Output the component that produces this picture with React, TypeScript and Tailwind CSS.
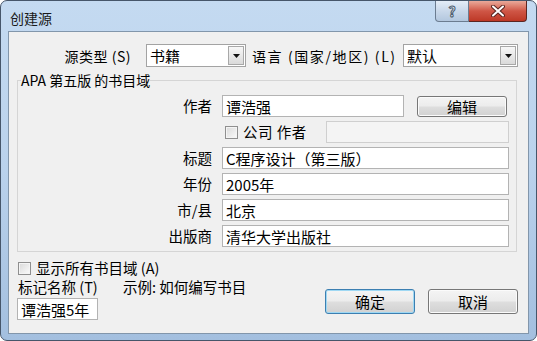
import React from 'react';

function Combo({ value, className }: { value: string; className: string }) {
  return (
    <div className={`flex h-[23px] items-center border border-[#a3a3a3] bg-white ${className}`}>
      <span className="flex-1 pl-[3px] text-[15px] leading-none">{value}</span>
      <span className="mr-[1px] flex h-[19px] w-[16px] items-center justify-center border border-[#a8a8a8] bg-gradient-to-b from-[#f7f7f7] to-[#dadada]">
        <svg width="7" height="4" viewBox="0 0 7 4">
          <path d="M0 0h7L3.5 4z" fill="#111" />
        </svg>
      </span>
    </div>
  );
}

function Field({ value, className }: { value?: string; className: string }) {
  return (
    <div
      className={`flex h-[22px] items-center border border-[#b3b3b3] pl-[3px] text-[15px] leading-none ${className}`}
    >
      {value}
    </div>
  );
}

function Btn({ label, className, primary }: { label: string; className: string; primary?: boolean }) {
  return (
    <div
      className={`flex items-center justify-center rounded-[3px] border bg-[linear-gradient(#f4f4f4_0%,#ececec_48%,#dedede_52%,#d1d1d1_100%)] text-[15px] leading-none ${
        primary
          ? 'border-[#3c7fb1] shadow-[inset_0_0_0_1px_#9fd8f3]'
          : 'border-[#777777] shadow-[inset_0_0_0_1px_#fbfbfb]'
      } ${className}`}
    >
      {label}
    </div>
  );
}

function Check() {
  return (
    <span className="block h-[13px] w-[13px] shrink-0 border border-[#8f8f8f] bg-gradient-to-br from-[#d9d9d9] to-[#fbfbfb] shadow-[inset_0_0_0_1px_#f4f4f4]" />
  );
}

export default function App() {
  return (
    <div className="h-[341px] w-[537px] bg-white font-['Noto_Sans_CJK_SC','Noto_Sans',sans-serif] text-black">
      <div className="flex h-full w-full flex-col rounded-[7px] border border-[#46566a] bg-gradient-to-b from-[#c4daf1] via-[#bad2ec] to-[#a3bfdf]">
        {/* title bar */}
        <div className="flex h-[30px] shrink-0">
          <span className="ml-[9px] mt-[10px] text-[14px] leading-none text-[#1a1a1a]">创建源</span>
          <div className="ml-auto mr-[9px] flex h-[21px]">
            <div className="flex w-[34px] items-center justify-center rounded-bl-[4px] border border-t-0 border-[#6b7c90] bg-gradient-to-b from-[#e4edf7] via-[#c9d8ea] to-[#b3c7de]">
              <span className="text-[14px] font-bold leading-none text-[#eef3f8] [-webkit-text-stroke:1px_#4a5a6c]">?</span>
            </div>
            <div className="flex w-[58px] items-center justify-center rounded-br-[4px] border border-l-0 border-t-0 border-[#5b2622] bg-gradient-to-b from-[#e9a99a] via-[#cf5646] to-[#bd3826]">
              <svg width="14" height="12" viewBox="0 0 14 12">
                <path d="M2 1.5 12 10.5M12 1.5 2 10.5" stroke="#5a2520" strokeWidth="4" strokeLinecap="round" />
                <path d="M2 1.5 12 10.5M12 1.5 2 10.5" stroke="#ffffff" strokeWidth="2" strokeLinecap="round" />
              </svg>
            </div>
          </div>
        </div>

        {/* client */}
        <div className="mx-[7px] flex h-[303px] shrink-0 flex-col border border-[#8296ab] bg-[#f0f0f0]">
          <div className="mt-[12px] flex h-[23px] items-center">
            <span className="w-[122px] text-right text-[14px] leading-none tracking-[0.5px]">源类型 (S)</span>
            <Combo value="书籍" className="ml-[15px] w-[100px]" />
            <span className="w-[157px] pl-[6px] text-[14px] leading-none tracking-[1.6px]">语言 (国家/地区) (L)</span>
            <Combo value="默认" className="w-[115px]" />
          </div>

          <fieldset className="ml-[8px] mt-[5px] w-[500px] border border-[#d5d5d5] px-0 pb-[4px]">
            <legend className="ml-[3px] text-[14px] leading-[16px]">APA 第五版 的书目域</legend>
            <div className="mt-[7px] flex flex-col gap-[4px]">
              <div className="flex h-[22px] items-center">
                <span className="w-[194px] text-right text-[14.5px] leading-none">作者</span>
                <Field value="谭浩强" className="ml-[10px] w-[182px] bg-white" />
                <Btn label="编辑" className="ml-[13px] h-[21px] w-[90px]" />
              </div>
              <div className="flex h-[22px] items-center">
                <span className="w-[194px]" />
                <span className="ml-[13px]">
                  <Check />
                </span>
                <span className="ml-[5px] text-[14.5px] leading-none tracking-[0.5px]">公司 作者</span>
                <Field className="ml-auto mr-[7px] w-[183px] bg-[#f4f4f4] border-[#cfcfcf]" />
              </div>
              <div className="flex h-[22px] items-center">
                <span className="w-[194px] text-right text-[14.5px] leading-none">标题</span>
                <Field value="C程序设计（第三版）" className="ml-[10px] w-[287px] bg-white" />
              </div>
              <div className="flex h-[22px] items-center">
                <span className="w-[194px] text-right text-[14.5px] leading-none">年份</span>
                <Field value="2005年" className="ml-[10px] w-[287px] bg-white" />
              </div>
              <div className="flex h-[22px] items-center">
                <span className="w-[194px] text-right text-[14.5px] leading-none">市/县</span>
                <Field value="北京" className="ml-[10px] w-[287px] bg-white" />
              </div>
              <div className="flex h-[22px] items-center">
                <span className="w-[194px] text-right text-[14.5px] leading-none">出版商</span>
                <Field value="清华大学出版社" className="ml-[10px] w-[287px] bg-white" />
              </div>
            </div>
          </fieldset>

          <div className="ml-[9px] mt-[8px] flex h-[16px] items-center">
            <Check />
            <span className="ml-[5px] text-[14.5px] leading-none">显示所有书目域 (A)</span>
          </div>

          <div className="flex">
            <div className="flex flex-col">
              <div className="ml-[9px] mt-[3px] flex h-[17px] items-center text-[14.5px] leading-none">
                <span className="w-[105px]">标记名称 (T)</span>
                <span>示例: 如何编写书目</span>
              </div>
              <Field value="谭浩强5年" className="ml-[8px] mt-[2px] w-[81px] bg-white" />
            </div>
            <div className="ml-auto mr-[10px] mt-[13px] flex gap-[13px]">
              <Btn label="确定" className="h-[25px] w-[90px]" primary />
              <Btn label="取消" className="h-[25px] w-[90px]" />
            </div>
          </div>
        </div>
      </div>
    </div>
  );
}
